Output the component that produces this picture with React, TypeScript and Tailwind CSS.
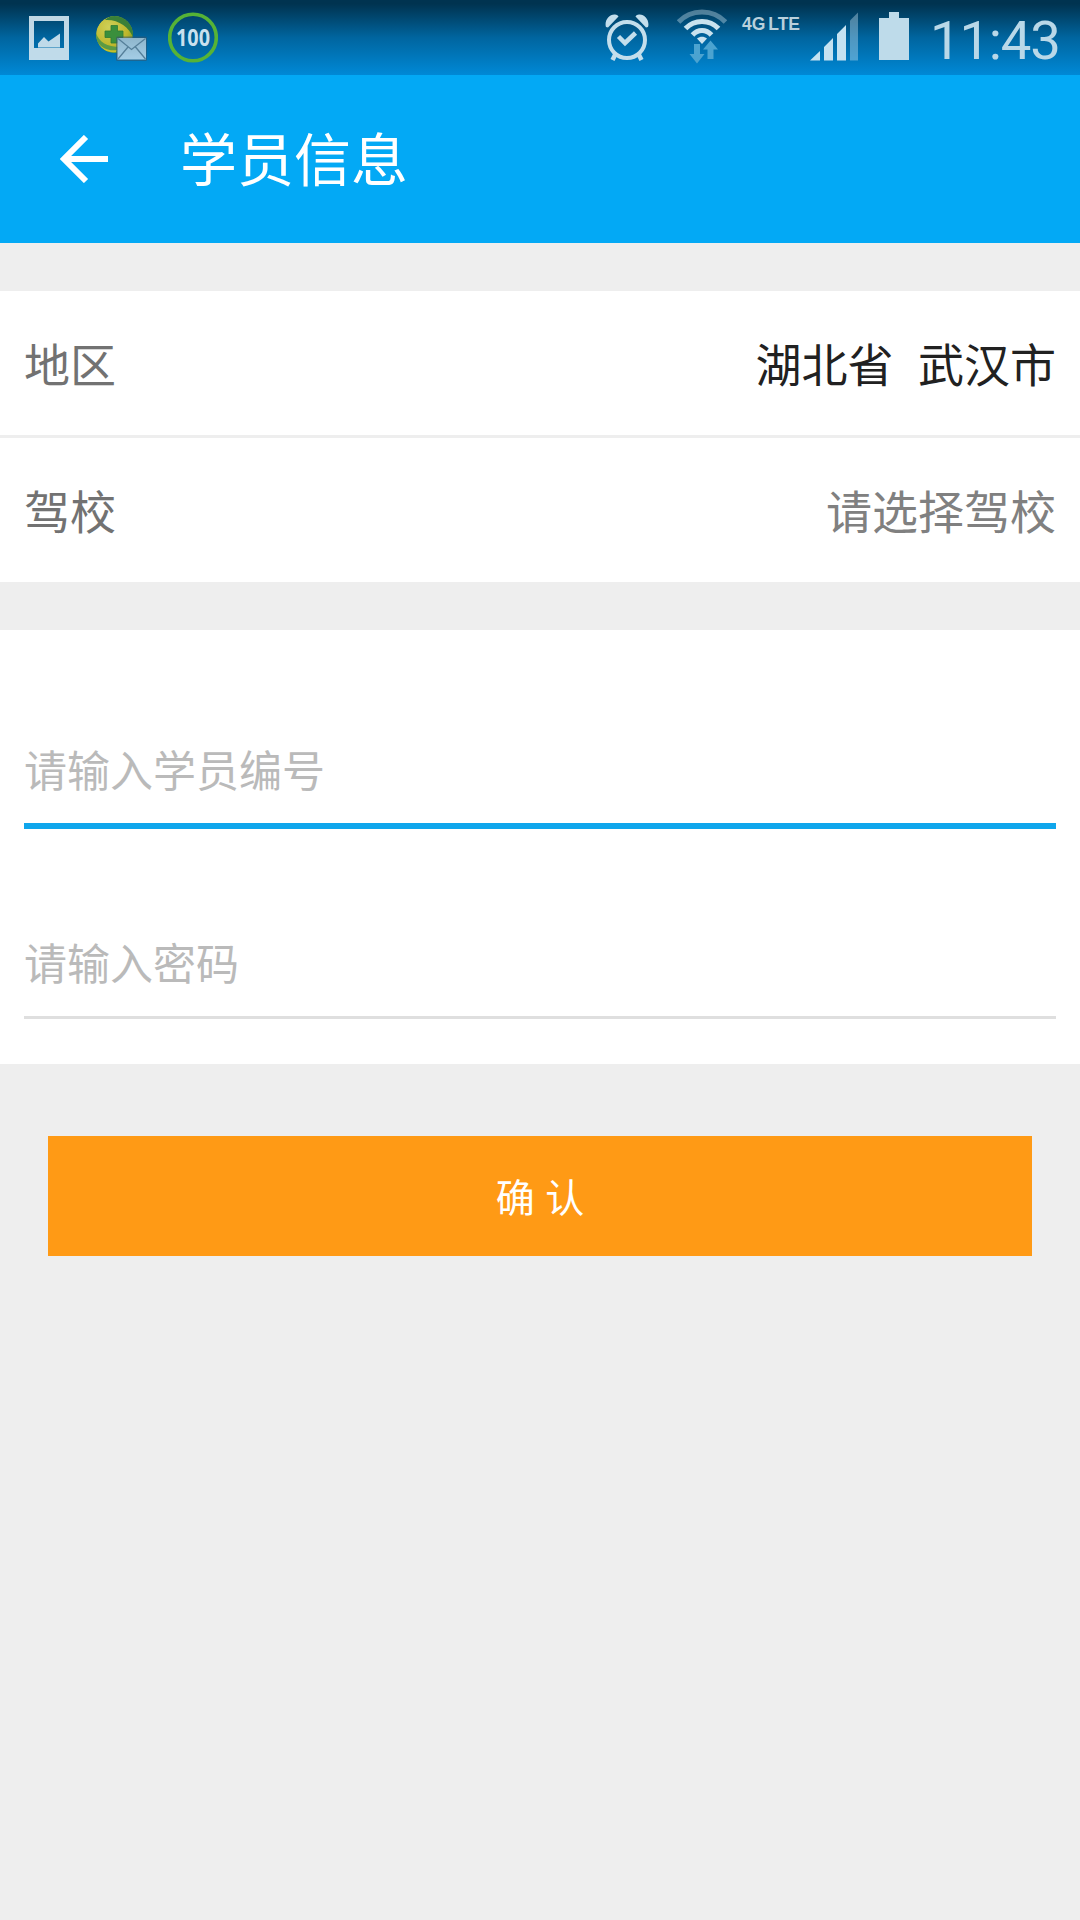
type RowProps = {
  label: string;
  value: string;
  valueClass: string;
};

function PictureIcon() {
  return (
    <svg width="40" height="44" viewBox="0 0 40 44" className="text-[#cfe3ee]">
      <path fill="currentColor" fillOpacity="0.93" fillRule="evenodd" d="M0 0h40v44H0zM5 5v27h30V5z" />
      <path fill="currentColor" fillOpacity="0.93" d="M9 31.500v-4l6-6.500 4.500 4.500L31 17.500v14z" />
    </svg>
  );
}

function MailIcon() {
  return (
    <svg width="51" height="46" viewBox="0 0 51 46">
      <defs>
        <radialGradient id="ball" cx="0.35" cy="0.3" r="0.75">
          <stop offset="0" stopColor="#cfd058" />
          <stop offset="0.7" stopColor="#bdb62a" />
          <stop offset="1" stopColor="#7d9a2b" />
        </radialGradient>
        <linearGradient id="letter" x1="0" y1="0" x2="0" y2="1">
          <stop offset="0" stopColor="#8fb6cc" />
          <stop offset="1" stopColor="#a4cde6" />
        </linearGradient>
        <clipPath id="ballClip">
          <circle cx="18.500" cy="18.500" r="18.500" />
        </clipPath>
      </defs>
      <g clipPath="url(#ballClip)">
        <circle cx="18.500" cy="18.500" r="18.500" fill="url(#ball)" />
        <path fill="#3a8038" d="M9 4C16-3 27-2 33 5s5 12 4 16C33 11 22 3 9 4z" />
        <path fill="#5b9a45" d="M0 17c3 9 11 14 24 14v8H8C2 34-2 25 0 17z" />
        <path fill="#c8c02c" d="M2 27c5 6 11 8 19 7l-1 2C12 37 6 34 2 27z" />
      </g>
      <path
        fill="#3a8f3c"
        stroke="#2f7b33"
        strokeWidth="0.8"
        d="M15 9.500h6.500V15H27v6.500h-5.500V27H15v-5.500H9V15h6z"
      />
      <rect x="20" y="20.500" width="31" height="24.500" rx="1.500" fill="#35556b" fillOpacity="0.55" />
      <rect x="21.500" y="22" width="28.500" height="21.500" rx="0.500" fill="url(#letter)" />
      <path fill="none" stroke="#557f99" strokeWidth="1.300" d="M22 22.500l13.500 11L49.500 22.500M22 43l10-12M49.500 43l-10-12" />
    </svg>
  );
}

function ScoreIcon() {
  return (
    <svg width="50" height="52" viewBox="0 0 50 52">
      <circle cx="25" cy="25.500" r="23.300" fill="#064a72" fillOpacity="0.2" stroke="#56b336" strokeWidth="3.600" />
      <text
        x="25"
        y="33.500"
        textAnchor="middle"
        textLength="34"
        lengthAdjust="spacingAndGlyphs"
        className="fill-[#c9e0ee] font-['Open_Sans',sans-serif] text-[23px] font-bold"
      >
        100
      </text>
    </svg>
  );
}

function AlarmIcon() {
  return (
    <svg width="46" height="48" viewBox="0 0 46 48" className="text-[#c3deec]" fill="none" stroke="currentColor">
      <circle cx="22" cy="26" r="18" strokeWidth="4" />
      <path strokeWidth="4.500" d="M13.500 22.500l6.500 6.500L30.500 19" />
      <path fill="currentColor" stroke="none" d="M1 13C-1 7 4 0 10 0.500c2 0 3 1 3.500 2L3 13.500zM43 13C45 7 40 0 34 0.500c-2 0-3 1-3.500 2L41 13.500z" />
      <path strokeWidth="4.500" d="M10.500 40l-3 6M33.500 40l3 6" />
    </svg>
  );
}

function WifiIcon() {
  return (
    <svg width="50" height="55" viewBox="0 0 50 55" className="text-[#c9e2ee]" fill="none" stroke="currentColor">
      <path strokeWidth="5" strokeOpacity="0.4" d="M1.500 13C14-0.500 36-0.500 48.500 13" />
      <path strokeWidth="5" d="M8.500 19.500C17.500 10 32.500 10 41.500 19.500" />
      <path strokeWidth="5" d="M15.500 26C21 20 29 20 34.500 26" />
      <path fill="currentColor" stroke="none" d="M25 35l-5-5.500c3-2.500 7-2.500 10 0z" />
      <path fill="#4ba3d0" stroke="none" d="M17 35h6v10h4.500l-7.500 9.500L12.500 45H17zM30.500 50h6V40.500H41L33.500 31.500L26 40.500h4.500z" />
    </svg>
  );
}

function SignalIcon() {
  return (
    <svg width="48" height="49" viewBox="0 0 48 49" className="text-[#c5e2f1]" fill="currentColor">
      <path d="M0 48.500L10 39v9.500zM14 35l9-9v22.500h-9zM27 22l9-9v35.500h-9z" />
      <path fillOpacity="0.4" d="M40 8.500l8-8v48h-8z" />
    </svg>
  );
}

function BatteryIcon() {
  return (
    <svg width="30" height="48" viewBox="0 0 30 48" className="text-[#bedbea]" fill="currentColor">
      <path d="M10 0h10v6h10v42H0V6h10z" />
    </svg>
  );
}

function StatusBar() {
  return (
    <div className="flex h-[75px] items-start bg-linear-to-b from-[#003350] from-5% via-[#00659f] via-50% to-[#0089d6] pl-[29px]">
      <div className="pt-4">
        <PictureIcon />
      </div>
      <div className="ml-[27px] pt-4">
        <MailIcon />
      </div>
      <div className="ml-[21px] pt-3">
        <ScoreIcon />
      </div>
      <div className="ml-[387px] pt-3.5">
        <AlarmIcon />
      </div>
      <div className="ml-[26px] pt-[9px]">
        <WifiIcon />
      </div>
      <svg width="68" height="32" className="mt-[6px] ml-[11px] overflow-visible">
        <text
          x="4"
          y="24"
          textLength="58"
          lengthAdjust="spacingAndGlyphs"
          className="fill-[#b9d0dc] font-['Liberation_Sans',sans-serif] text-[18px] font-bold [word-spacing:-2px]"
        >
          4G LTE
        </text>
      </svg>
      <div className="ml-[4px] pt-3">
        <SignalIcon />
      </div>
      <div className="ml-[21px] pt-3">
        <BatteryIcon />
      </div>
      <span className="mt-[8px] ml-[21px] font-[Roboto,sans-serif] text-[54.5px] leading-[64px] font-normal tracking-[-1.2px] text-[#b9d8e8]">
        11:43
      </span>
    </div>
  );
}

function Row({ label, value, valueClass }: RowProps) {
  return (
    <div className="flex h-36 items-center justify-between bg-white px-6 pb-[2px] text-[46px] leading-none">
      <span className="text-[#727272]">{label}</span>
      <span className={`whitespace-pre [word-spacing:2px] ${valueClass}`}>{value}</span>
    </div>
  );
}

export default function App() {
  return (
    <div className="min-h-[1920px] w-[1080px] bg-[#eeeeee] font-['Noto_Sans_CJK_SC',sans-serif]">
      <StatusBar />

      <header className="flex h-[168px] items-center bg-[#03a9f5] pl-[60px] text-white">
        <svg width="48" height="48" viewBox="0 0 48 48" fill="none" stroke="currentColor" strokeWidth="6">
          <path d="M48 24H6M26 2L4 24l22 22" />
        </svg>
        <h1 className="ml-[72px] pb-[5px] text-[57px] leading-none">学员信息</h1>
      </header>

      <section className="mt-12 flex flex-col gap-[3px]">
        <Row label="地区" value="湖北省  武汉市" valueClass="text-[#212121]" />
        <Row label="驾校" value="请选择驾校" valueClass="text-[#808080]" />
      </section>

      <form className="mt-12 h-[434px] bg-white px-6 pt-[108px]">
        <input
          type="text"
          placeholder="请输入学员编号"
          className="block h-[91px] w-full border-b-[6px] border-[#0fa6ec] pb-[25px] text-[43px] leading-[60px] outline-none placeholder:text-[#bababa]"
        />
        <input
          type="password"
          placeholder="请输入密码"
          className="mt-[102px] block h-[88px] w-full border-b-[3px] border-[#dfdfdf] pb-[25px] text-[43px] leading-[60px] outline-none placeholder:text-[#bababa]"
        />
      </form>

      <div className="px-12 pt-[72px]">
        <button className="flex h-[120px] w-full items-center justify-center bg-[#ff9a15] pb-[2px] text-[39px] leading-none text-white [word-spacing:2px]">
          确 认
        </button>
      </div>
    </div>
  );
}
